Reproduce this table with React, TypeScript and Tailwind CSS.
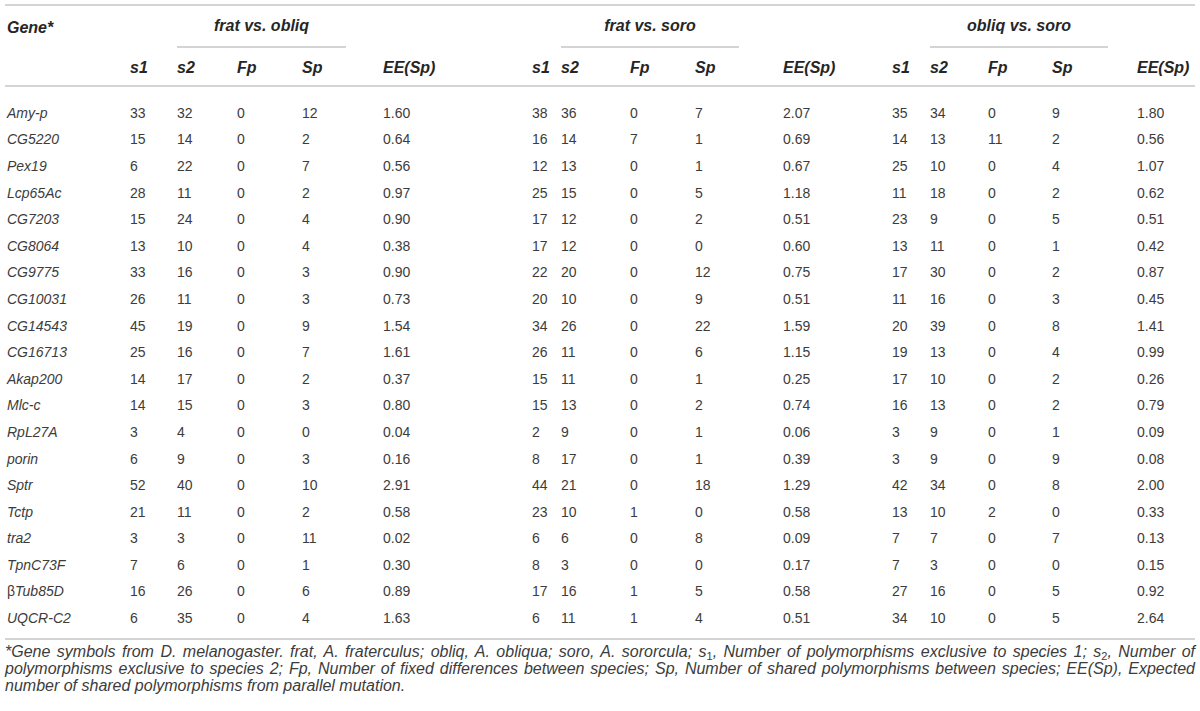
import * as React from "react"

type Row = [string, ...(number | string)[]]

const ROWS: Row[] = [
  ["Amy-p", 33, 32, 0, 12, "1.60", 38, 36, 0, 7, "2.07", 35, 34, 0, 9, "1.80"],
  ["CG5220", 15, 14, 0, 2, "0.64", 16, 14, 7, 1, "0.69", 14, 13, 11, 2, "0.56"],
  ["Pex19", 6, 22, 0, 7, "0.56", 12, 13, 0, 1, "0.67", 25, 10, 0, 4, "1.07"],
  ["Lcp65Ac", 28, 11, 0, 2, "0.97", 25, 15, 0, 5, "1.18", 11, 18, 0, 2, "0.62"],
  ["CG7203", 15, 24, 0, 4, "0.90", 17, 12, 0, 2, "0.51", 23, 9, 0, 5, "0.51"],
  ["CG8064", 13, 10, 0, 4, "0.38", 17, 12, 0, 0, "0.60", 13, 11, 0, 1, "0.42"],
  ["CG9775", 33, 16, 0, 3, "0.90", 22, 20, 0, 12, "0.75", 17, 30, 0, 2, "0.87"],
  ["CG10031", 26, 11, 0, 3, "0.73", 20, 10, 0, 9, "0.51", 11, 16, 0, 3, "0.45"],
  ["CG14543", 45, 19, 0, 9, "1.54", 34, 26, 0, 22, "1.59", 20, 39, 0, 8, "1.41"],
  ["CG16713", 25, 16, 0, 7, "1.61", 26, 11, 0, 6, "1.15", 19, 13, 0, 4, "0.99"],
  ["Akap200", 14, 17, 0, 2, "0.37", 15, 11, 0, 1, "0.25", 17, 10, 0, 2, "0.26"],
  ["Mlc-c", 14, 15, 0, 3, "0.80", 15, 13, 0, 2, "0.74", 16, 13, 0, 2, "0.79"],
  ["RpL27A", 3, 4, 0, 0, "0.04", 2, 9, 0, 1, "0.06", 3, 9, 0, 1, "0.09"],
  ["porin", 6, 9, 0, 3, "0.16", 8, 17, 0, 1, "0.39", 3, 9, 0, 9, "0.08"],
  ["Sptr", 52, 40, 0, 10, "2.91", 44, 21, 0, 18, "1.29", 42, 34, 0, 8, "2.00"],
  ["Tctp", 21, 11, 0, 2, "0.58", 23, 10, 1, 0, "0.58", 13, 10, 2, 0, "0.33"],
  ["tra2", 3, 3, 0, 11, "0.02", 6, 6, 0, 8, "0.09", 7, 7, 0, 7, "0.13"],
  ["TpnC73F", 7, 6, 0, 1, "0.30", 8, 3, 0, 0, "0.17", 7, 3, 0, 0, "0.15"],
  ["βTub85D", 16, 26, 0, 6, "0.89", 17, 16, 1, 5, "0.58", 27, 16, 0, 5, "0.92"],
  ["UQCR-C2", 6, 35, 0, 4, "1.63", 6, 11, 1, 4, "0.51", 34, 10, 0, 5, "2.64"],
]

// column widths measured off the page, every row shares them
const GRID =
  "grid grid-cols-[125px_47px_60px_65px_81px_149px_29px_69px_65px_88px_109px_38px_58px_64px_85px_58px]"

const GROUPS = [
  { label: "frat vs. obliq", width: "w-[169px]" },
  { label: "frat vs. soro", width: "w-[178px]" },
  { label: "obliq vs. soro", width: "w-[178px]" },
]

const SUB_HEADS = ["s1", "s2", "Fp", "Sp", "EE(Sp)"]

function GeneName({ name }: { name: string }) {
  if (name.startsWith("β")) {
    return (
      <span>
        β<i>{name.slice(1)}</i>
      </span>
    )
  }
  return <i>{name}</i>
}

function Sub({ n }: { n: string }) {
  return <span className="relative top-[3px] text-[11px] not-italic leading-none">{n}</span>
}

export default function App() {
  return (
    <div className="min-h-[711px] bg-white pt-[4px] font-['Liberation_Sans',Arial,sans-serif] text-[14px] text-[#3c3c3c]">
      <div className="mx-[5px] w-[1190px] border-t-2 border-[#d4d4d4]">
        {/* Group headings */}
        <div className={`${GRID} h-[42px] items-end text-[16px] font-bold italic text-[#262626]`}>
          <div className="self-center pl-[2px] pt-[2px]">Gene*</div>
          {GROUPS.map((g) => (
            <React.Fragment key={g.label}>
              <div />
              <div className="col-span-3">
                <div className={`${g.width} border-b-2 border-[#d4d4d4] pb-[11px] text-center leading-[18px]`}>
                  {g.label}
                </div>
              </div>
              <div />
            </React.Fragment>
          ))}
        </div>

        {/* Column headings */}
        <div className={`${GRID} h-[39px] items-center border-b-2 border-[#d4d4d4] pt-[2px] text-[16px] font-bold italic text-[#262626]`}>
          <div />
          {GROUPS.map((g) => (
            <React.Fragment key={g.label}>
              {SUB_HEADS.map((h) => (
                <div key={h}>{h}</div>
              ))}
            </React.Fragment>
          ))}
        </div>

        {/* Body */}
        <div className="border-b-2 border-[#d4d4d4] pb-[6px] pt-[13px]">
          {ROWS.map((row) => (
            <div key={row[0]} className={`${GRID} h-[26.6px] items-center`}>
              <div className="pl-[2px]">
                <GeneName name={row[0]} />
              </div>
              {row.slice(1).map((v, i) => (
                <div key={i}>{v}</div>
              ))}
            </div>
          ))}
        </div>

        {/* Footnote */}
        <div className="pt-[3px] text-[16px] leading-[17px] italic">
          <div className="text-justify [text-align-last:justify]">
            *Gene symbols from D. melanogaster. frat, A. fraterculus; obliq, A. obliqua; soro, A. sororcula; s<Sub n="1" />, Number of polymorphisms exclusive to species 1; s<Sub n="2" />, Number of
          </div>
          <div className="text-justify [text-align-last:justify]">
            polymorphisms exclusive to species 2; Fp, Number of fixed differences between species; Sp, Number of shared polymorphisms between species; EE(Sp), Expected
          </div>
          <div>number of shared polymorphisms from parallel mutation.</div>
        </div>
      </div>
    </div>
  )
}
